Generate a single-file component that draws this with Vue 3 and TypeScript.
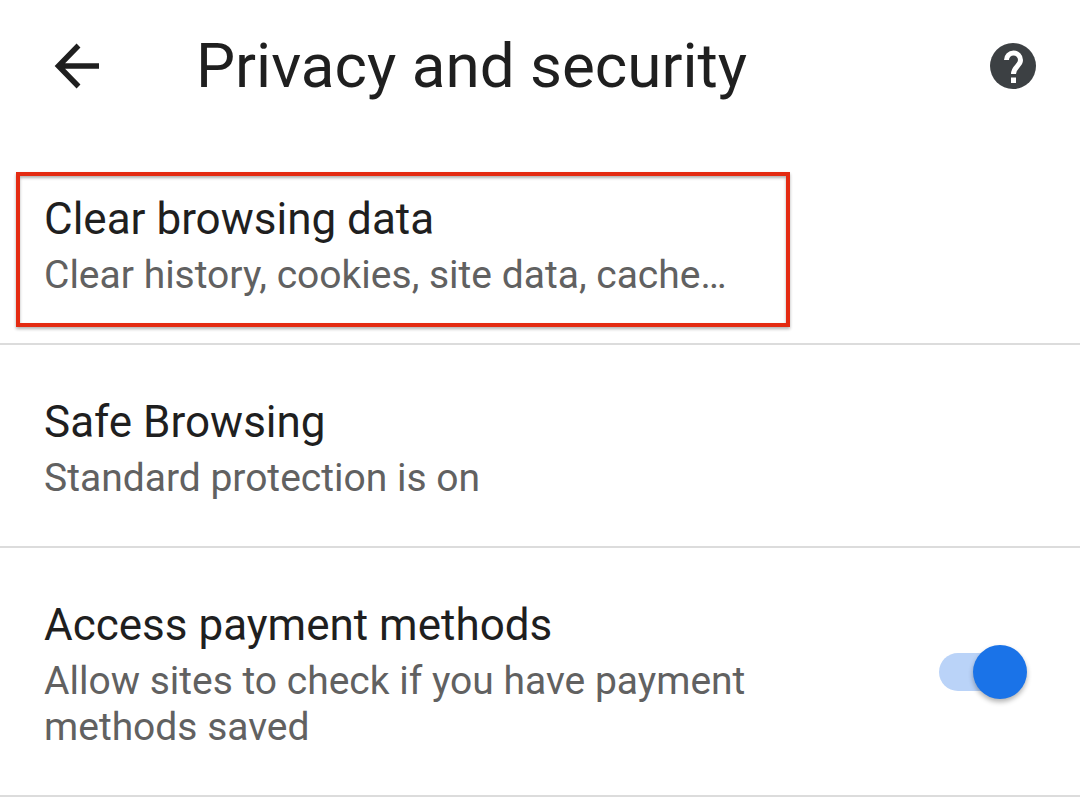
<script setup lang="ts">
import { ref } from 'vue'

interface SettingLink {
  title: string
  summary: string
  highlighted: boolean
}

const links: SettingLink[] = [
  { title: 'Clear browsing data', summary: 'Clear history, cookies, site data, cache…', highlighted: true },
  { title: 'Safe Browsing', summary: 'Standard protection is on', highlighted: false },
]

const paymentAccess = ref<boolean>(true)
</script>

<template>
  <div class="screen">
    <header class="bar">
      <button class="icon-button back" type="button" aria-label="Back">
        <svg width="46" height="46" viewBox="0 0 46 46" fill="none" stroke="#1f1f1f" stroke-width="5.500" aria-hidden="true">
          <path d="M24.5 2.5 4.5 23l20 20.500M4.500 23H45" />
        </svg>
      </button>
      <h1 class="heading">Privacy and security</h1>
      <button class="icon-button" type="button" aria-label="Help">
        <svg width="46" height="46" viewBox="0 0 46 46" aria-hidden="true">
          <circle cx="23" cy="23" r="23" fill="#3c4043" />
          <path d="M16.500 17a7 7 0 0 1 14 0c0 6-7 6.500-7 14" fill="none" stroke="#fff" stroke-width="5" />
          <path d="M21 34.500h5V40h-5z" fill="#fff" />
        </svg>
      </button>
    </header>

    <main>
      <button v-for="link in links" :key="link.title" class="row" type="button">
        <span class="text">
          <span class="title">{{ link.title }}</span>
          <span class="summary">{{ link.summary }}</span>
        </span>
        <span v-if="link.highlighted" class="highlight" aria-hidden="true"></span>
      </button>

      <label class="row">
        <span class="text">
          <span class="title">Access payment methods</span>
          <span class="summary">Allow sites to check if you have payment methods saved</span>
        </span>
        <input v-model="paymentAccess" class="switch" type="checkbox" role="switch" />
      </label>
    </main>
  </div>
</template>

<style>
body {
  margin: 0;
  background: #fff;
}
</style>

<style scoped>
.screen {
  font-family: Roboto, "Liberation Sans", sans-serif;
  color: #1f1f1f;
}

.bar {
  display: flex;
  align-items: center;
  box-sizing: border-box;
  min-height: 142px;
  padding: 0 44px 10px 54px;
}

.icon-button {
  display: flex;
  padding: 0;
  border: 0;
  background: none;
  cursor: pointer;
}

.back {
  margin-right: 96px;
}

.heading {
  flex: 1;
  margin: 0;
  font-size: 62px;
  line-height: 72px;
  font-weight: 400;
}

.row {
  position: relative;
  display: flex;
  align-items: center;
  gap: 80px;
  box-sizing: border-box;
  width: 100%;
  padding: 46px 53px 45px 44px;
  border: 0;
  border-bottom: 2px solid #dcdcdc;
  background: none;
  color: inherit;
  font: inherit;
  text-align: left;
  cursor: pointer;
}

.text {
  display: flex;
  flex: 1;
  flex-direction: column;
  gap: 7px;
  padding-top: 5px;
}

.title {
  font-size: 44px;
  line-height: 52px;
}

.summary {
  font-size: 39px;
  line-height: 46px;
  color: #616161;
}

.highlight {
  position: absolute;
  inset: 30px 290px 16px 16px;
  border: 4px solid #e42b12;
  box-shadow: 0 2px 3px rgba(0, 0, 0, 0.3), inset 0 2px 3px rgba(0, 0, 0, 0.3);
  pointer-events: none;
}

.switch {
  appearance: none;
  position: relative;
  flex: none;
  width: 88px;
  height: 54px;
  margin: 0;
  cursor: pointer;
}

.switch::before {
  content: "";
  position: absolute;
  inset: 8px 8px 8px 0;
  border-radius: 19px;
  background: #dadce0;
}

.switch::after {
  content: "";
  position: absolute;
  top: 0;
  left: 0;
  width: 54px;
  height: 54px;
  border-radius: 50%;
  background: #fff;
  box-shadow: 0 3px 5px rgba(0, 0, 0, 0.3);
}

.switch:checked::before {
  background: #bad3f8;
}

.switch:checked::after {
  left: auto;
  right: 0;
  background: #1a73e8;
}
</style>
